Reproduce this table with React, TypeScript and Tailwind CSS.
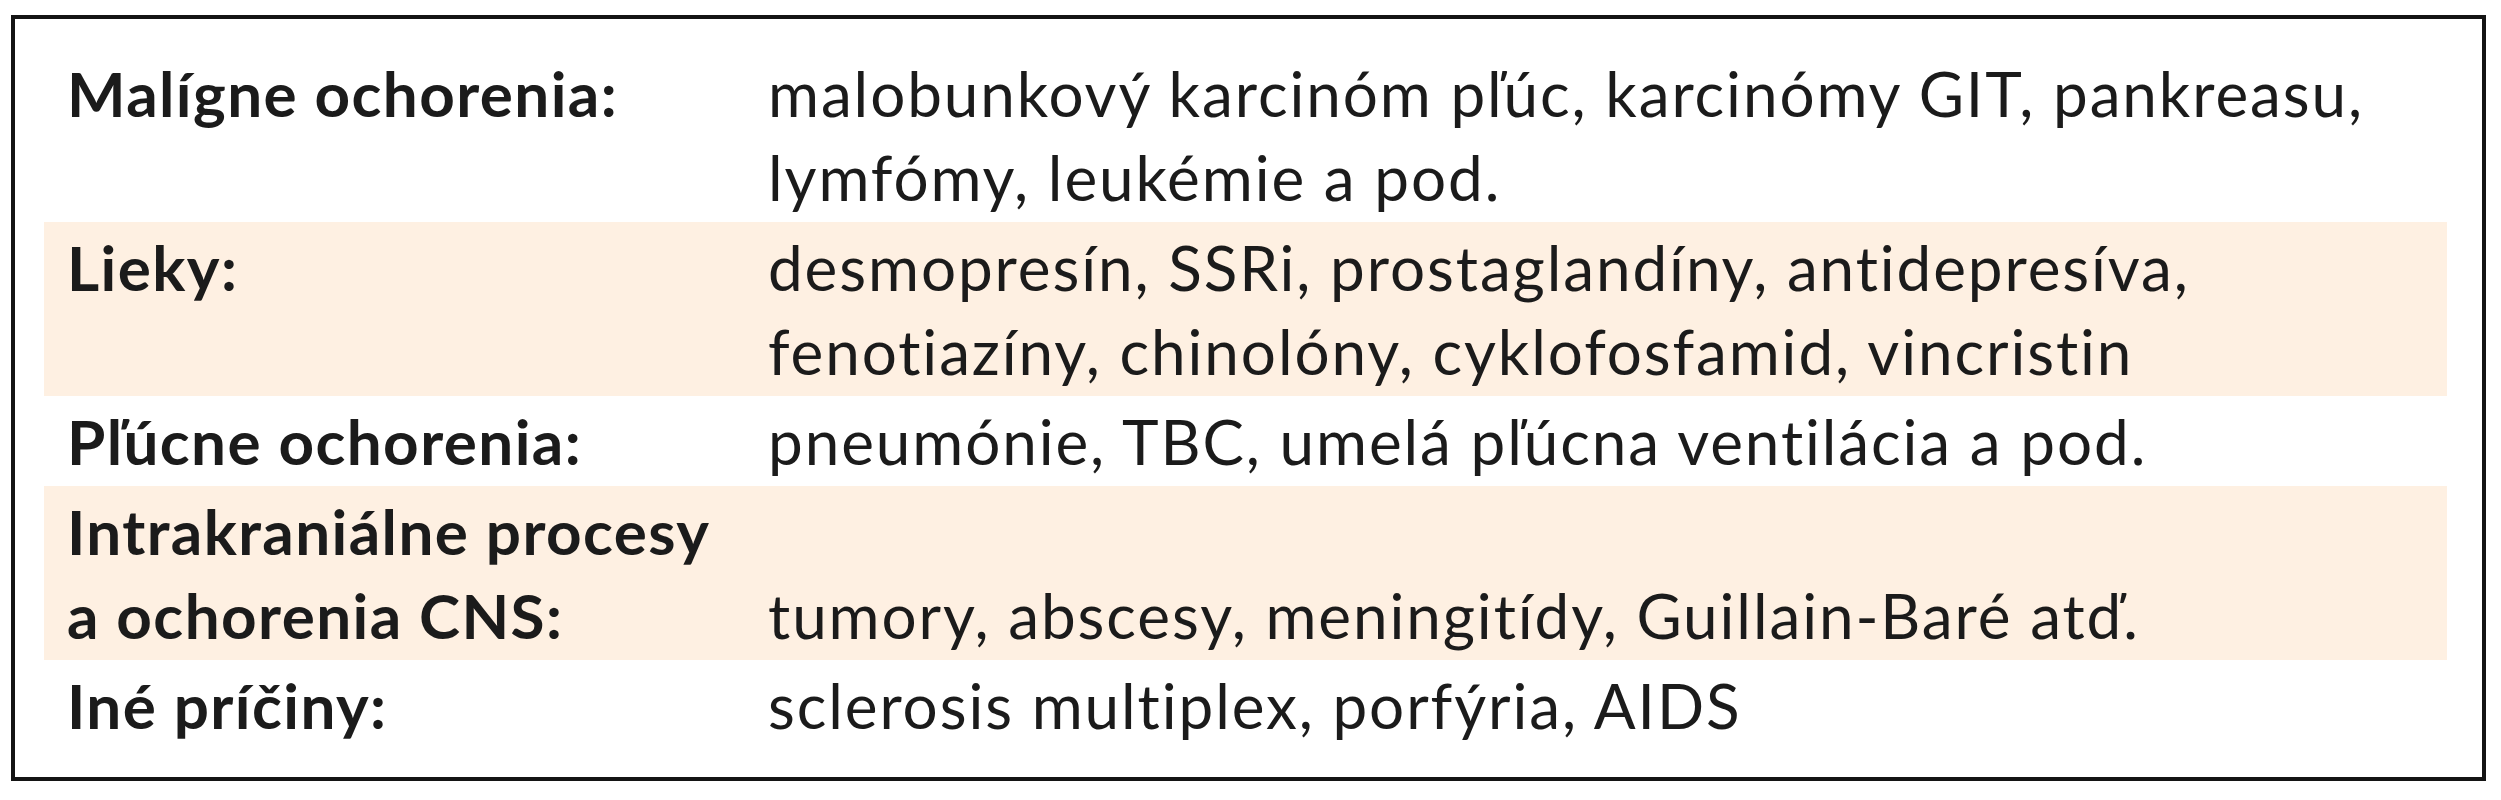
import React from 'react'

interface Row {
	label: string[]
	value: string[]
	shaded: boolean
	valueAtEnd?: boolean
}

const rows: Row[] = [
	{
		label: ['Malígne ochorenia:'],
		value: ['malobunkový karcinóm pľúc, karcinómy GIT, pankreasu,', 'lymfómy, leukémie a pod.'],
		shaded: false,
	},
	{
		label: ['Lieky:'],
		value: ['desmopresín, SSRi, prostaglandíny, antidepresíva,', 'fenotiazíny, chinolóny, cyklofosfamid, vincristin'],
		shaded: true,
	},
	{
		label: ['Pľúcne ochorenia:'],
		value: ['pneumónie, TBC, umelá pľúcna ventilácia a pod.'],
		shaded: false,
	},
	{
		label: ['Intrakraniálne procesy', 'a ochorenia CNS:'],
		value: ['tumory, abscesy, meningitídy, Guillain-Baré atď.'],
		shaded: true,
		valueAtEnd: true,
	},
	{
		label: ['Iné príčiny:'],
		value: ['sclerosis multiplex, porfýria, AIDS'],
		shaded: false,
	},
]

const App = () => {
	return (
		<div className="w-[2501px] h-[800px] bg-white pl-[11px] pt-[15px] font-['Lato',sans-serif] text-[#1b1b1b]">
			<div className="w-[2475px] h-[766px] border-4 border-[#141414] pt-[29px] pb-[27px] pl-[29px] pr-[35px]">
				{rows.map((row) => (
					<div
						key={row.label.join(' ')}
						className={`flex py-[3px] text-[62px] leading-[84px] ${row.shaded ? 'bg-[#fef0e2]' : ''}`}
					>
						<div className="w-[724px] shrink-0 pl-[23px] font-bold tracking-[1.4px] whitespace-nowrap">
							{row.label.map((line) => (
								<div key={line}>{line}</div>
							))}
						</div>
						<div className={`flex-1 tracking-[1.9px] whitespace-nowrap ${row.valueAtEnd ? 'self-end' : ''}`}>
							{row.value.map((line) => (
								<div key={line}>{line}</div>
							))}
						</div>
					</div>
				))}
			</div>
		</div>
	)
}

export default App
